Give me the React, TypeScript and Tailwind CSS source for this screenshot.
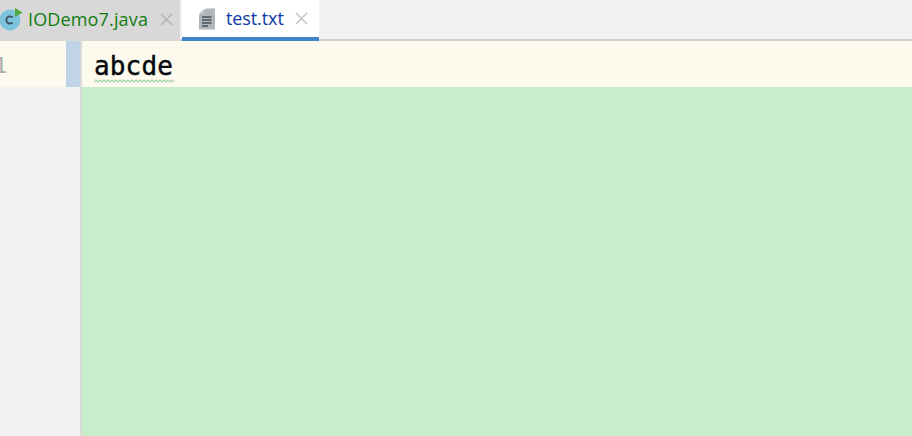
const mono = { fontFamily: '"DejaVu Sans Mono", monospace' };

function ClassIcon() {
  return (
    <svg width="24" height="24" viewBox="0 0 24 24" className="shrink-0">
      <circle cx="10" cy="13" r="10.5" fill="#7cc4dc" />
      <path d="M12.6 10.6a3.6 3.6 0 1 0 0 4.8" fill="none" stroke="#3d4f5c" strokeWidth="1.7" />
      <path d="M15 1 L22.5 5.5 L15 10 Z" fill="#4fa83d" />
    </svg>
  );
}

function TextFileIcon() {
  return (
    <svg width="18" height="22" viewBox="0 0 18 22" className="shrink-0">
      <path d="M7 0.5H16V21.5H0V7Z" fill="#aeb6bc" />
      <path d="M5 0.5V5.5H0Z" fill="#c6cbcf" />
      <path d="M3 9h9.5M3 12h9.5M3 15h9.5M3 18h6" stroke="#4a5055" strokeWidth="1.5" />
    </svg>
  );
}

function CloseIcon({ color }: { color: string }) {
  return (
    <svg width="13" height="13" viewBox="0 0 13 13" className="shrink-0">
      <path d="M1 1 L12 12 M12 1 L1 12" stroke={color} strokeWidth="1.5" />
    </svg>
  );
}

export default function App() {
  return (
    <div className="flex h-[436px] w-[912px] flex-col overflow-hidden bg-[#f2f2f2] font-['Open_Sans','Noto_Sans',sans-serif]">
      {/* Tabs */}
      <div className="flex h-[41px] shrink-0 border-b-2 border-[#d1d1d1]">
        <div className="flex h-[41px] w-[180px] items-center bg-[#d8d8d8] pb-[3px]">
          <ClassIcon />
          <span className="ml-[4px] text-[18px] tracking-[0.15px] text-[#107c10]">IODemo7.java</span>
          <span className="ml-[12px]"><CloseIcon color="#b4b4b4" /></span>
        </div>
        <div className="ml-[2px] flex h-[41px] w-[137px] items-center border-b-4 border-[#4083c9] bg-white">
          <span className="ml-[17px]"><TextFileIcon /></span>
          <span className="ml-[9px] text-[18px] tracking-[-0.1px] text-[#0a3aa8]">test.txt</span>
          <span className="ml-[11px]"><CloseIcon color="#c4c4c4" /></span>
        </div>
      </div>

      {/* Editor */}
      <div className="flex min-h-0 flex-1">
        <div className="flex w-[80px] shrink-0 flex-col">
          <div className="flex h-[46px] items-center overflow-hidden bg-[#fcfaed]">
            <span style={mono} className="w-[66px] shrink-0 pt-[4px] pl-[0px] text-[22px] leading-none indent-[-6px] text-[#adadad]">1</span>
            <div className="h-full w-[14px] bg-[#c0d3e7]" />
          </div>
        </div>
        <div className="w-[2px] shrink-0 bg-[#d6dbd6]" />
        <div className="flex min-w-0 flex-1 flex-col bg-[#c8edcb]">
          <div className="flex h-[46px] items-center bg-[#fcfaed] pl-[12px]">
            <span className="relative pt-[4px] text-[26px] leading-[42px] tracking-[0.15px] text-[#05080f] [-webkit-text-stroke:0.4px_#05080f]" style={mono}>
              abcde
              <svg width="80" height="4" viewBox="0 0 80 4" className="absolute bottom-[4px] left-0">
                <path
                  d="M0 3l2-2 2 2 2-2 2 2 2-2 2 2 2-2 2 2 2-2 2 2 2-2 2 2 2-2 2 2 2-2 2 2 2-2 2 2 2-2 2 2 2-2 2 2 2-2 2 2 2-2 2 2 2-2 2 2 2-2 2 2 2-2 2 2 2-2 2 2 2-2 2 2 2-2 2 2 2-2 2 2"
                  fill="none"
                  stroke="#a3d3a3"
                  strokeWidth="1.1"
                />
              </svg>
            </span>
          </div>
        </div>
      </div>
    </div>
  );
}
